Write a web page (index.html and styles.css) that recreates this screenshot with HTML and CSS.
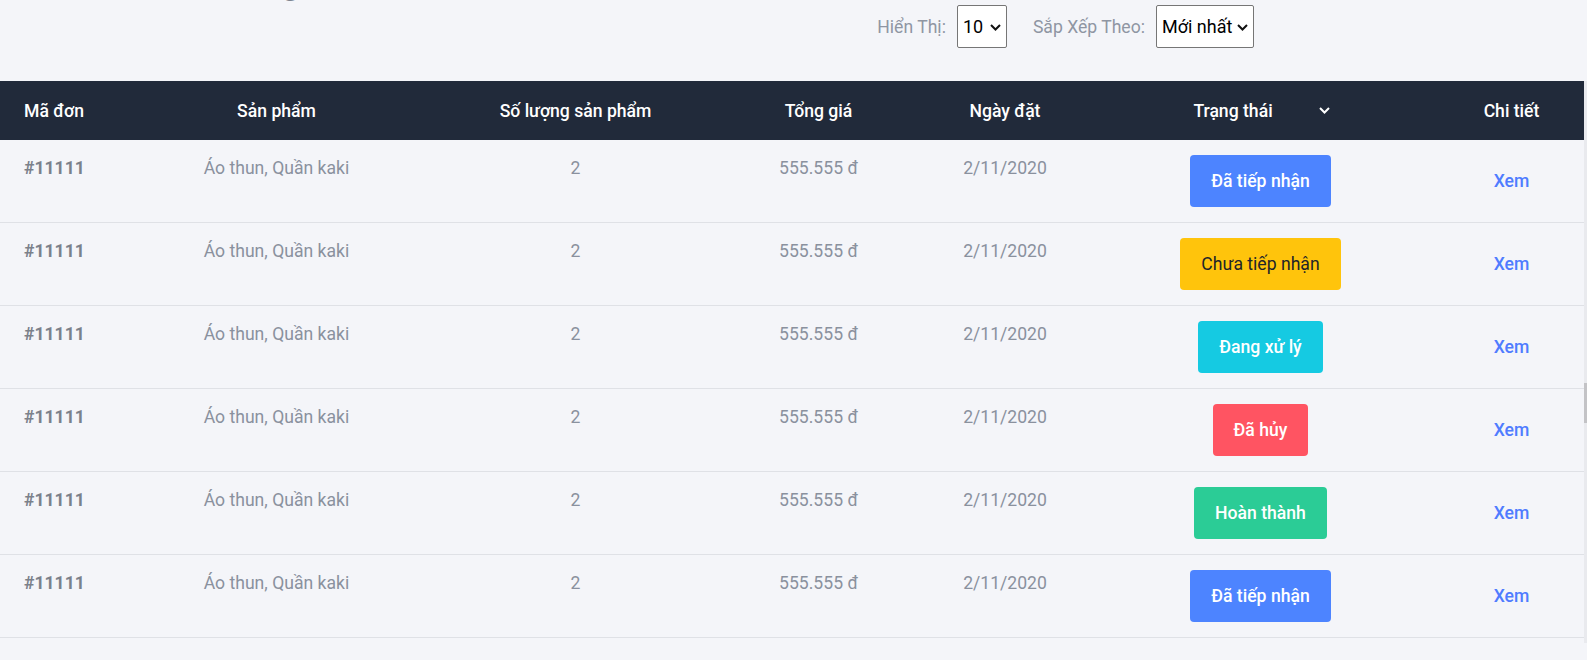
FILE: index.html
```html
<!DOCTYPE html>
<html lang="vi">
<head>
<meta charset="utf-8">
<title>Đơn hàng</title>
<link rel="stylesheet" href="styles.css">
</head>
<body>
<div class="page">
  <div class="topbar">
    <h2 class="title">Danh sách đơn hàng</h2>
    <div class="controls">
      <label class="ctl-label">Hiển Thị:</label>
      <span class="select-wrap sel-small">
        <select class="select"><option>10</option><option>20</option></select>
        <svg class="sel-arrow" width="11" height="7" viewBox="0 0 11 7"><path d="M1 1l4.5 4.5L10 1" fill="none" stroke="#111" stroke-width="2"/></svg>
      </span>
      <label class="ctl-label ctl-gap">Sắp Xếp Theo:</label>
      <span class="select-wrap sel-big">
        <select class="select"><option>Mới nhất</option><option>Cũ nhất</option></select>
        <svg class="sel-arrow" width="11" height="7" viewBox="0 0 11 7"><path d="M1 1l4.5 4.5L10 1" fill="none" stroke="#111" stroke-width="2"/></svg>
      </span>
    </div>
  </div>

  <div class="table-area">
    <table class="orders">
      <colgroup>
        <col class="c1"><col class="c2"><col class="c3"><col class="c4"><col class="c5"><col class="c6"><col class="c7">
      </colgroup>
      <thead>
        <tr>
          <th class="left">Mã đơn</th>
          <th>Sản phẩm</th>
          <th>Số lượng sản phẩm</th>
          <th>Tổng giá</th>
          <th>Ngày đặt</th>
          <th><span class="th-status">Trạng thái<svg width="11" height="7" viewBox="0 0 11 7"><path d="M1 1l4.5 4.5L10 1" fill="none" stroke="#fff" stroke-width="2"/></svg></span></th>
          <th>Chi tiết</th>
        </tr>
      </thead>
      <tbody>
        <tr>
          <td class="left id">#11111</td><td>Áo thun, Quần kaki</td><td>2</td><td>555.555 đ</td><td>2/11/2020</td>
          <td class="status"><span class="badge blue">Đã tiếp nhận</span></td><td class="detail"><a href="#">Xem</a></td>
        </tr>
        <tr>
          <td class="left id">#11111</td><td>Áo thun, Quần kaki</td><td>2</td><td>555.555 đ</td><td>2/11/2020</td>
          <td class="status"><span class="badge yellow">Chưa tiếp nhận</span></td><td class="detail"><a href="#">Xem</a></td>
        </tr>
        <tr>
          <td class="left id">#11111</td><td>Áo thun, Quần kaki</td><td>2</td><td>555.555 đ</td><td>2/11/2020</td>
          <td class="status"><span class="badge cyan">Đang xử lý</span></td><td class="detail"><a href="#">Xem</a></td>
        </tr>
        <tr>
          <td class="left id">#11111</td><td>Áo thun, Quần kaki</td><td>2</td><td>555.555 đ</td><td>2/11/2020</td>
          <td class="status"><span class="badge red">Đã hủy</span></td><td class="detail"><a href="#">Xem</a></td>
        </tr>
        <tr>
          <td class="left id">#11111</td><td>Áo thun, Quần kaki</td><td>2</td><td>555.555 đ</td><td>2/11/2020</td>
          <td class="status"><span class="badge green">Hoàn thành</span></td><td class="detail"><a href="#">Xem</a></td>
        </tr>
        <tr>
          <td class="left id">#11111</td><td>Áo thun, Quần kaki</td><td>2</td><td>555.555 đ</td><td>2/11/2020</td>
          <td class="status"><span class="badge blue">Đã tiếp nhận</span></td><td class="detail"><a href="#">Xem</a></td>
        </tr>
      </tbody>
    </table>
    <div class="scrollbar"><div class="thumb"></div></div>
  </div>
</div>
</body>
</html>
```

FILE: styles.css
```css
* { box-sizing: border-box; }
html, body {
  margin: 0;
  padding: 0;
  background: #f4f5f9;
  font-family: Roboto, "Noto Sans", "Liberation Sans", sans-serif;
  overflow: hidden;
}
.page {
  width: 1587px;
  height: 660px;
  background: #f4f5f9;
}
.topbar {
  display: flex;
  align-items: flex-start;
  height: 81px;
}
.title {
  margin: -33px 0 0 24px;
  font-size: 30px;
  font-weight: 700;
  color: #7d8491;
  line-height: 36px;
  white-space: nowrap;
}
.controls {
  margin-left: auto;
  margin-right: 333px;
  margin-top: 5px;
  display: flex;
  align-items: center;
  height: 43px;
}
.ctl-label {
  font-size: 17.6px;
  color: #8f96a3;
  margin-right: 11px;
}
.ctl-gap { margin-left: 26px; }
.select-wrap {
  position: relative;
  display: inline-block;
  height: 43px;
}
.select {
  appearance: none;
  -webkit-appearance: none;
  height: 43px;
  border: 1px solid #767676;
  border-radius: 2px;
  background: #fff;
  font-family: Roboto, "Noto Sans", "Liberation Sans", sans-serif;
  font-size: 18px;
  color: #000;
  padding: 0 0 0 5px;
  outline: none;
}
.sel-small .select { width: 50px; }
.sel-big .select { width: 98px; }
.sel-arrow {
  position: absolute;
  right: 6px;
  top: 19px;
  pointer-events: none;
}
.table-area {
  display: flex;
  align-items: flex-start;
}
.orders {
  width: 1584px;
  border-collapse: collapse;
  table-layout: fixed;
}
.c1 { width: 111px; }
.c2 { width: 331px; }
.c3 { width: 267px; }
.c4 { width: 219px; }
.c5 { width: 154px; }
.c6 { width: 357px; }
.c7 { width: 145px; }
.orders thead tr {
  background: #212a3a;
  height: 59px;
}
.orders th {
  color: #fff;
  font-size: 17.6px;
  font-weight: 500;
  text-align: center;
  padding: 0;
  vertical-align: middle;
  white-space: nowrap;
}
.orders th.left { text-align: left; padding-left: 24px; }
.th-status {
  display: inline-flex;
  align-items: center;
  gap: 46px;
  padding-left: 2px;
}
.orders td {
  text-align: center;
  vertical-align: top;
  padding: 15px 0 15px;
  font-size: 17.6px;
  line-height: 26px;
  color: #8a919e;
  border-bottom: 1px solid #dfe1e6;
  white-space: nowrap;
}
.orders td.left { text-align: left; padding-left: 24px; }
.orders td.id { font-weight: 700; color: #7b818b; }
.orders td.status { vertical-align: top; }
.orders td.detail { vertical-align: top; padding-top: 28px; }
.detail a {
  color: #4f7cff;
  font-weight: 500;
  text-decoration: none;
}
.badge {
  display: inline-flex;
  align-items: center;
  justify-content: center;
  height: 52px;
  padding: 0 21px;
  border-radius: 4px;
  color: #fff;
  font-weight: 500;
  font-size: 17.6px;
  line-height: 20px;
  vertical-align: top;
}
.blue { background: #4d84ff; }
.yellow { background: #ffc40c; color: #212529; font-weight: 400; }
.cyan { background: #15cae2; }
.red { background: #ff5462; }
.green { background: #2bcc96; }
.scrollbar {
  width: 3px;
  height: 562px;
  background: #e9eaee;
  display: flex;
  flex-direction: column;
}
.thumb {
  margin-top: 302px;
  height: 40px;
  background: #c3c3c6;
}
```
